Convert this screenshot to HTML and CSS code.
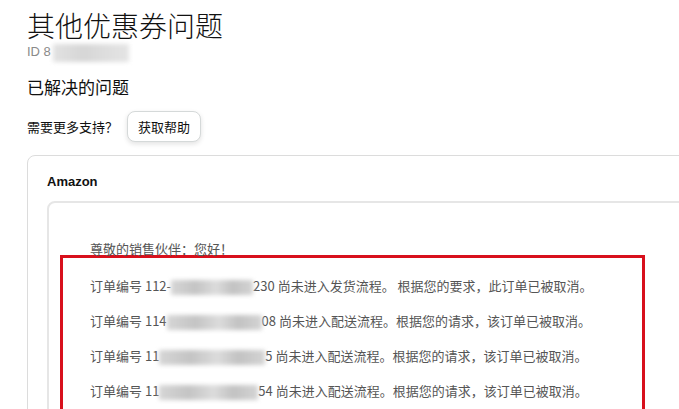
FILE: index.html
```html
<!DOCTYPE html>
<html lang="zh-CN">
<head>
  <meta charset="UTF-8">
  <meta name="viewport" content="width=device-width, initial-scale=1.0">
  <title>其他优惠券问题</title>
  <link rel="stylesheet" href="styles.css">
</head>
<body>
  <div class="page">
    <h1 class="case-title">其他优惠券问题</h1>
    <div class="case-id">ID 8<span class="blur blur-id"></span></div>
    <h2 class="case-status">已解决的问题</h2>

    <div class="help-row">
      <span>需要更多支持？</span>
      <button class="help-button">获取帮助</button>
    </div>

    <!-- 卖家支持回复 -->
    <div class="card">
      <div class="card-sender">Amazon</div>
      <div class="message">
        <p class="greeting">尊敬的销售伙伴：您好！</p>
        <div class="highlight">
          <p class="order-line">订单编号 112-<span class="blur blur-a"></span>230 尚未进入发货流程。 根据您的要求，此订单已被取消。</p>
          <p class="order-line">订单编号 114<span class="blur blur-b"></span>08 尚未进入配送流程。根据您的请求，该订单已被取消。</p>
          <p class="order-line">订单编号 11<span class="blur blur-c"></span>5 尚未进入配送流程。根据您的请求，该订单已被取消。</p>
          <p class="order-line">订单编号 11<span class="blur blur-d"></span>54 尚未进入配送流程。根据您的请求，该订单已被取消。</p>
        </div>
      </div>
    </div>
  </div>
</body>
</html>
```

FILE: styles.css
```css
html, body {
  margin: 0;
  background-color: #fff;
  overflow: hidden;
}

body {
  font-family: "Noto Sans CJK SC", "Liberation Sans", sans-serif;
  color: #111;
}

.page {
  padding: 9px 0 0 27px;
}

.case-title {
  margin: 0;
  font-size: 28px;
  font-weight: 300;
  line-height: 32px;
}

.case-id {
  margin-top: 2px;
  font-size: 13px;
  line-height: 18px;
  color: #8a8a8a;
  font-family: "Liberation Sans", "Noto Sans CJK SC", sans-serif;
}

.case-status {
  margin: 14px 0 0;
  font-size: 17px;
  font-weight: 400;
  line-height: 22px;
}

.help-row {
  display: flex;
  align-items: center;
  gap: 9px;
  margin-top: 13px;
  font-size: 13px;
}

.help-button {
  height: 31px;
  padding: 0 10px;
  font-family: inherit;
  font-size: 13px;
  color: #111;
  background-color: #fff;
  border: 1px solid #d5d9d9;
  border-radius: 8px;
  box-shadow: 0 2px 5px rgba(15, 17, 17, 0.12);
}

/* 回复卡片，超出右侧 */
.card {
  width: 720px;
  margin-top: 13px;
  padding: 17px 0 0 19px;
  border: 1px solid #dcdcdc;
  border-radius: 8px;
  height: 400px;
}

.card-sender {
  font-family: "Liberation Sans", sans-serif;
  font-weight: 700;
  font-size: 13px;
  line-height: 18px;
}

.message {
  margin-top: 10px;
  padding: 37px 0 0 11px;
  border: 2px solid #e6e6e6;
  border-radius: 8px;
  height: 400px;
}

.greeting {
  margin: 0 0 0 30px;
  font-size: 13px;
  line-height: 18px;
  color: #555;
}

.highlight {
  width: 552px;
  margin-top: -3px;
  padding: 19px 0 0 27px;
  border: 3px solid #d8101c;
  height: 300px;
}

.order-line {
  margin: 0 0 17px;
  font-size: 13px;
  line-height: 18px;
  color: #555;
  white-space: nowrap;
}

.blur {
  display: inline-block;
  height: 15px;
  vertical-align: middle;
  filter: blur(2px);
  background: linear-gradient(90deg, #d6d6d6, #c4c4c4 30%, #dcdcdc 55%, #c2c2c2 75%, #d4d4d4);
}

.blur-id {
  width: 76px;
  margin-left: 2px;
  height: 18px;
  background: linear-gradient(90deg, #e2e2e2, #d6d6d6 40%, #dedede 70%, #e4e4e4);
}

.blur-a { width: 82px; }
.blur-b { width: 95px; }
.blur-c { width: 106px; }
.blur-d { width: 99px; }
```
